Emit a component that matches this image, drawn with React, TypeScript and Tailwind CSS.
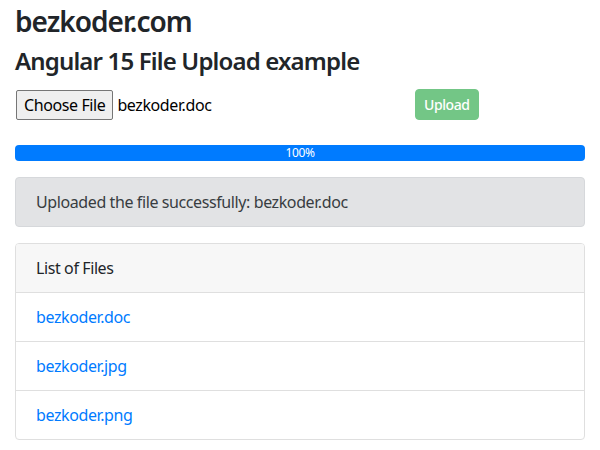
import React from "react";

export default function App() {
  const files = ["bezkoder.doc", "bezkoder.jpg", "bezkoder.png"];
  return (
    <div
      className="w-[600px] h-[450px] overflow-hidden bg-white px-[15px] pt-[5px] text-[#212529] text-base leading-normal tracking-[-0.025em]"
      style={{ fontFamily: '"Noto Sans", "Open Sans", sans-serif' }}
    >
      <h3 className="text-[28px] font-semibold leading-[1.2] mb-2 tracking-[-0.035em]">bezkoder.com</h3>
      <h4 className="text-[24px] font-semibold leading-[1.2] mb-[14px] tracking-[-0.035em]">Angular 15 File Upload example</h4>

      <div className="flex items-center h-[31px]">
        <div className="w-[400px] flex items-center">
          <div className="h-[30px] ml-px px-[7px] flex items-center border border-[#767676] bg-[#efefef] rounded-[2px] text-base text-black">
            Choose File
          </div>
          <span className="ml-[4px] text-black">bezkoder.doc</span>
        </div>
        <button className="h-[31px] px-2 rounded-[4px] bg-[#73c686] border border-[#73c686] text-white text-sm leading-normal font-medium">
          Upload
        </button>
      </div>

      <div className="mt-[25px] h-4 rounded-[4px] bg-[#007bff] text-white text-xs leading-4 text-center overflow-hidden">
        100%
      </div>

      <div className="mt-4 h-[50px] px-5 flex items-center rounded-[4px] bg-[#e2e3e5] border border-[#d6d8db] text-[#383d41]">
        Uploaded the file successfully: bezkoder.doc
      </div>

      <div className="mt-4 border border-[#dfdfdf] rounded-[4px] overflow-hidden">
        <div className="h-[49px] px-5 flex items-center bg-[#f7f7f7] border-b border-[#dfdfdf]">List of Files</div>
        {files.map((f, i) => (
          <div
            key={f}
            className={
              i < files.length - 1
                ? "h-[49px] px-5 flex items-center border-b border-[#dfdfdf]"
                : "h-[48px] px-5 flex items-center"
            }
          >
            <a href="#" className="text-[#007bff]">{f}</a>
          </div>
        ))}
      </div>
    </div>
  );
}
